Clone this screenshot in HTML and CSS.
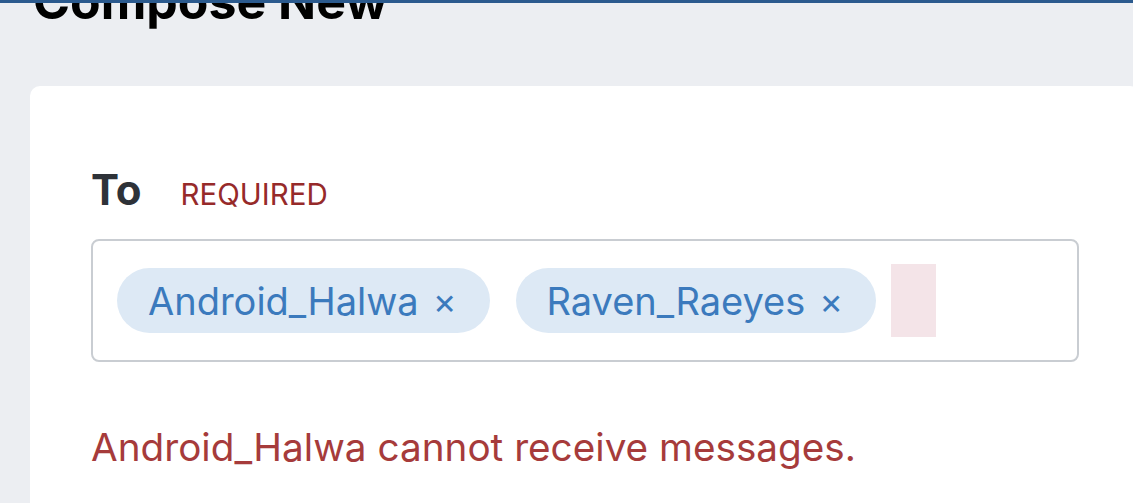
FILE: index.html
```html
<!DOCTYPE html>
<html lang="en">
<head>
    <meta charset="UTF-8">
    <meta name="viewport" content="width=device-width, initial-scale=1.0">
    <title>Compose New</title>
    <link rel="stylesheet" href="styles.css">
</head>
<body>
    <div class="topbar"></div>
    <main class="page">
        <h1 class="page-title">Compose New</h1>
        <section class="card">
            <div class="field">
                <div class="field-label">
                    <label for="to-input">To</label>
                    <span class="required">Required</span>
                </div>
                <div class="recipients">
                    <span class="chip">Android_Halwa <span class="chip-remove">×</span></span>
                    <span class="chip">Raven_Raeyes <span class="chip-remove">×</span></span>
                    <input id="to-input" class="recipient-input" type="text">
                </div>
                <p class="field-error">Android_Halwa cannot receive messages.</p>
            </div>
        </section>
    </main>
</body>
</html>
```

FILE: styles.css
```css
*, *::before, *::after {
    margin: 0;
    padding: 0;
    box-sizing: border-box;
}

body {
    font-family: Inter, "Noto Sans", sans-serif;
    background-color: #eceef2;
    color: #111;
    overflow: hidden;
}

.topbar {
    position: fixed;
    top: 0;
    left: 0;
    right: 0;
    height: 3px;
    background-color: #2b5a8e;
    z-index: 10;
}

.page {
    padding-left: 30px;
}

.page-title {
    font-size: 50px;
    font-weight: 700;
    line-height: 60px;
    margin-top: -29px;
    padding-left: 3px;
    color: #000;
}

.card {
    margin-top: 55px;
    width: 1110px;
    background-color: #fff;
    border-radius: 10px;
    padding: 78px 61px 80px;
}

.field-label {
    display: flex;
    align-items: baseline;
    gap: 39px;

    label {
        font-size: 42px;
        font-weight: 700;
        color: #2e3238;
    }

    .required {
        font-size: 29.5px;
        text-transform: uppercase;
        color: #962a2a;
    }
}

.recipients {
    margin-top: 24px;
    border: 2px solid #c9cdd2;
    border-radius: 8px;
    padding: 27px 24px;
    display: flex;
    align-items: center;
    gap: 26px;
    height: 123px;
}

.chip {
    display: inline-flex;
    align-items: center;
    height: 65px;
    padding: 0 33px 0 31px;
    border-radius: 33px;
    background-color: #dde9f5;
    color: #3b7abd;
    font-size: 38px;
    white-space: nowrap;
}

.chip-remove {
    margin-left: 14px;
    font-size: 36px;
}

.recipient-input {
    width: 45px;
    height: 73px;
    margin-left: -11px;
    border: none;
    outline: none;
    background-color: #f4e4e8;
    font: inherit;
}

.field-error {
    margin-top: 62px;
    font-size: 38.7px;
    color: #a63b3b;
}
```
